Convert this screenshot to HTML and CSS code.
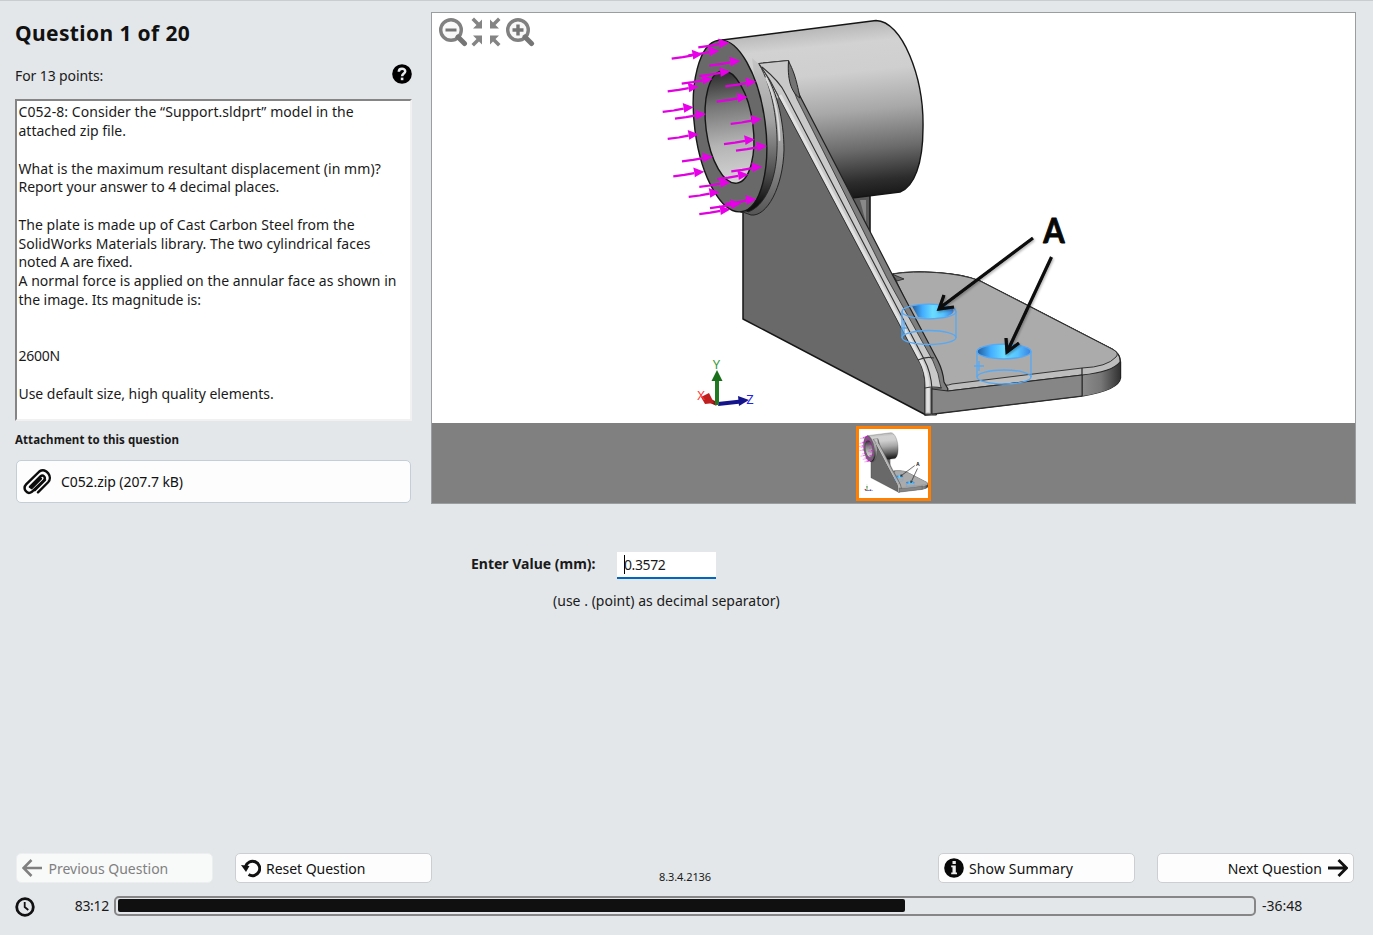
FILE: index.html
```html
<!DOCTYPE html>
<html lang="en">
<head>
<meta charset="utf-8">
<title>Question 1 of 20</title>
<link rel="stylesheet" href="styles.css">
</head>
<body>
<div class="app">
  <main class="main">
    <section class="question">
      <h1 class="title">Question 1 of 20</h1>
      <div class="points-row">
        <span class="points">For 13 points:</span>
        <svg class="help" viewBox="0 0 20 20"><circle cx="10" cy="10" r="9.8"/><path d="M6.8 7.8C6.8 3.6 13.3 3.8 13.2 7.5C13.1 9.6 10.2 9.6 10.1 12.2" fill="none" stroke="#e9ecee" stroke-width="2.5"/><rect x="8.8" y="13.6" width="2.6" height="2.6" fill="#e9ecee"/></svg>
      </div>
      <div class="statement">
        <p class="loose">C052-8: Consider the “Support.sldprt” model in the</p>
        <p>attached zip file.</p>
        <p></p>
        <p class="loose">What is the maximum resultant displacement (in mm)?</p>
        <p class="tight">Report your answer to 4 decimal places.</p>
        <p></p>
        <p class="open">The plate is made up of Cast Carbon Steel from the</p>
        <p class="open">SolidWorks Materials library. The two cylindrical faces</p>
        <p class="tighter">noted A are fixed.</p>
        <p class="open">A normal force is applied on the annular face as shown in</p>
        <p class="tight">the image. Its magnitude is:</p>
        <p></p>
        <p></p>
        <p class="figure">2600N</p>
        <p></p>
        <p class="tight">Use default size, high quality elements.</p>
      </div>
      <h2 class="attach-title">Attachment to this question</h2>
      <button class="attachment">
        <svg viewBox="0 0 30 28"><path d="M15.5 25.2L26 14.8C31.2 9.2 24 -1 17 3.5L3.2 17C-.8 21.5 4.2 28.4 9.2 24.7L21.6 12.8C24.3 9.4 20.6 6.4 18 8.7L7.2 19.6M12.2 23L22.8 12.3M8.8 20.8L18.5 11" fill="none" stroke="#0c0c0c" stroke-width="2.5" stroke-linecap="round"/></svg>
        <span>C052.zip (207.7 kB)</span>
      </button>
    </section>

    <section class="work">
      <div class="viewer">
        <div class="canvas">
          <svg class="model" viewBox="432 13 923 410">
            <defs>
              <linearGradient id="barrel" gradientUnits="userSpaceOnUse" x1="810" y1="26" x2="828" y2="203">
                <stop offset="0" stop-color="#b4b4b4"/><stop offset=".12" stop-color="#d2d2d2"/><stop offset=".28" stop-color="#cfcfcf"/><stop offset=".5" stop-color="#a8a8a8"/><stop offset=".72" stop-color="#6b6b6b"/><stop offset=".9" stop-color="#2c2c2c"/><stop offset="1" stop-color="#161616"/>
              </linearGradient>
              <linearGradient id="bore" x1="0" y1="0" x2="0" y2="1">
                <stop offset="0" stop-color="#2b2b2b"/><stop offset=".3" stop-color="#767676"/><stop offset=".65" stop-color="#b4b4b4"/><stop offset="1" stop-color="#d5d5d5"/>
              </linearGradient>
              <linearGradient id="fillet" x1="0" y1="0" x2="0" y2="1">
                <stop offset="0" stop-color="#c4c4c4"/><stop offset=".45" stop-color="#a8a8a8"/><stop offset=".75" stop-color="#7c7c7c"/><stop offset="1" stop-color="#555"/>
              </linearGradient>
              <linearGradient id="neck" x1="0" y1="0" x2="0" y2="1">
                <stop offset="0" stop-color="#c6c6c6"/><stop offset=".4" stop-color="#a4a4a4"/><stop offset=".72" stop-color="#555"/><stop offset=".95" stop-color="#101010"/>
              </linearGradient>
              <linearGradient id="nose" x1="0" y1="0" x2="1" y2="0">
                <stop offset="0" stop-color="#8c8c8c"/><stop offset=".5" stop-color="#777"/><stop offset="1" stop-color="#333"/>
              </linearGradient>
              <linearGradient id="hole" x1="0" y1="0" x2="1" y2="0">
                <stop offset="0" stop-color="#235a98"/><stop offset=".25" stop-color="#42adff"/><stop offset=".5" stop-color="#6bdcff"/><stop offset=".75" stop-color="#55c4ff"/><stop offset="1" stop-color="#3a80e0"/>
              </linearGradient>
              <filter id="shade" x="-20%" y="-20%" width="150%" height="150%"><feDropShadow dx="1" dy="1.5" stdDeviation="1.2" flood-opacity=".3"/></filter>
              <g id="load"><path d="M-30 4.600L-19 3.200L-16 2.600L-9 1.400" fill="none" stroke="#e000e0" stroke-width="2.200"/><path d="M1 0L-10 -4.300L-9 1L-8.500 5.500Z" fill="#e800e8"/></g>
              <g id="bracket" stroke-linejoin="round">
                <!-- rear post and base plate -->
                <path d="M848 190H870V236L860 222Z" fill="#5b5b5b" stroke="#181818" stroke-width="1.6"/>
                <path d="M860 200H866V223Z" fill="#898989"/>
                <path d="M893 274C916 270 958 272 980 281L1112 349Q1120 354 1120.500 362V378Q1119 390 1082 396L925 415L924 385Z" fill="#858585" stroke="#222" stroke-width="1.400"/>
                <path d="M1082 369Q1114 367 1120 355V379Q1117 391 1082 396Z" fill="url(#nose)"/>
                <path d="M893 274C916 270 958 272 980 281L1112 349Q1121 354 1120 362Q1112 372 1082 375L948 391Q943 391 940 387L936 369Z" fill="#bdbdbd" stroke="#282828" stroke-width="1.2"/>
                <path d="M893 274C916 270 958 272 980 281L1112 349Q1120 353 1116 357Q1107 367 1082 368L952 384Q944 387 941 383L936 365Z" fill="#ababab" stroke="#343434" stroke-width="1"/>
                <path d="M1082 368V396" stroke="#222" fill="none" stroke-width="1.2"/>
                <path d="M892 274L904 279L897 281Z" fill="#666" stroke="#222" stroke-width=".8"/>
                <!-- barrel -->
                <path d="M722 40L876 20.500C902 21 924 77 923 128C923 164 914 187 900 192L741 212Z" fill="url(#barrel)" stroke="#151515" stroke-width="1.4"/>
                <!-- web -->
                <path d="M743 200L765 110L779 97L920 360L925 386V414.500L743 319Z" fill="#696969"/>
                <path d="M743 210V319L925 414.500" fill="none" stroke="#161616" stroke-width="1.5"/>
                <!-- fillet ring and neck behind the annular face -->
                <path d="M759 64C777 86 784 122 784 150C783 187 767 217 751 215L740 211L765 120Z" fill="url(#fillet)" stroke="#242424" stroke-width="1"/>
                <path d="M752 58L759 64C773 88 778 125 777 150C776 181 765 206 748 212L738 209L760 120Z" fill="url(#neck)"/>
                <path d="M759 64C773 88 778 125 777 150C776 181 765 206 748 212" fill="none" stroke="#242424" stroke-width=".9"/>
                <path d="M766 78C775 97 779 120 779.500 140" fill="none" stroke="#dcdcdc" stroke-width="1.800" stroke-linecap="round"/>
                <!-- sloped flange -->
                <path d="M759 63.500L788.500 60.500L792 80L801 98L892 274L938 361Q943 371 944 382L948 389L936 415H925V388Q925 369 918 359L779 97Q771 80 759 63.500Z" fill="#7e7e7e" stroke="#202020" stroke-width="1.200"/>
                <path d="M759 63.500L788.500 60.500L790 81L797 99L887 278L933 361Q939 373 941 388H931V414H925V388Q925 369 918 359L779 97Q771 80 759 63.500Z" fill="#c9c9c9" stroke="#383838" stroke-width=".9"/>
                <path d="M780 95L920 359Q928 374 928 390V412" fill="none" stroke="#e2e2e2" stroke-width="3"/>
                <path d="M762 67Q780 82 785 93L924 359Q931 372 932 389V414" fill="none" stroke="#303030" stroke-width="1.1"/>
                <path d="M788.500 61C787 83 793 94 800 98C796 77 793 70 788.500 61Z" fill="#737373" stroke="#262626" stroke-width="1"/>
                <path d="M918 360Q926 356 934 358M925 388Q933 386 942 388" fill="none" stroke="#383838" stroke-width="1.1"/>
                <path d="M932 389L948 391L1082 375V396L932 414Z" fill="#868686" stroke="#292929" stroke-width="1"/>
                <!-- annular face -->
                <ellipse cx="730" cy="126" rx="35.300" ry="86.500" transform="rotate(-7.500 730 126)" fill="#696969" stroke="#161616" stroke-width="1.4"/>
                <ellipse cx="729.500" cy="127" rx="23.500" ry="56.600" transform="rotate(-7.500 729.500 127)" fill="url(#bore)" stroke="#161616" stroke-width="1.4"/>
                <!-- fixed faces -->
                <path d="M912 306Q929 302 948 306Q959 311 948 316Q934 320 918 317Z" fill="url(#hole)"/>
                <ellipse cx="1004" cy="351.500" rx="27" ry="7.300" fill="url(#hole)"/>
                <g fill="none" stroke="#55a9f5" stroke-width="1.300">
                  <ellipse cx="929" cy="311.500" rx="27" ry="7.300"/><ellipse cx="929" cy="337.500" rx="27" ry="7"/><path d="M902 311V338M956 311V338M904 320V335M902 328H907"/>
                  <ellipse cx="1004" cy="351.500" rx="27" ry="7.300"/><ellipse cx="1004" cy="377" rx="27" ry="7"/><path d="M977 351V377M1031 351V377M979 361V371M974 366H984"/>
                </g>
                <!-- callout -->
                <g filter="url(#shade)">
                  <path d="M1033 238L941 307M944 295L939 309L954 307M1051.500 257L1008 350M1006 338L1007 352L1019 343" fill="none" stroke="#080808" stroke-width="3.200" stroke-linejoin="miter"/>
                </g>
                <text transform="translate(1054 243) scale(.88 1)" class="callout">A</text>
                <!-- force arrows -->
                <use href="#load" x="728.300" y="42.700"/><use href="#load" x="718.300" y="50.700"/><use href="#load" x="701.700" y="54"/><use href="#load" x="739.300" y="61"/><use href="#load" x="729.300" y="71.500"/><use href="#load" x="711.700" y="79"/><use href="#load" x="697.700" y="86.700"/><use href="#load" x="755.300" y="81.700"/><use href="#load" x="746.700" y="97"/><use href="#load" x="692.700" y="107.300"/><use href="#load" x="705" y="114"/><use href="#load" x="760.700" y="119.300"/><use href="#load" x="697.700" y="134.300"/><use href="#load" x="754" y="139.500"/><use href="#load" x="766" y="146"/><use href="#load" x="712" y="156.700"/><use href="#load" x="703.300" y="171.700"/><use href="#load" x="761.300" y="166.700"/><use href="#load" x="747.300" y="174.500"/><use href="#load" x="729.300" y="182.300"/><use href="#load" x="718.700" y="192.300"/><use href="#load" x="755.300" y="199.300"/><use href="#load" x="740" y="203.500"/><use href="#load" x="729.300" y="209.500"/>
                <!-- axis triad -->
                <path d="M717 404L706 399" stroke="#8d1414" stroke-width="4"/><path d="M701 397L709 393L714 403L705 404Z" fill="#c01f1f"/>
                <path d="M718 404L741 401.500" stroke="#14148c" stroke-width="3.800"/><path d="M738 396L749 400L739 406Z" fill="#14148c"/>
                <path d="M717 405V380" stroke="#217a21" stroke-width="4"/><path d="M711.500 381L717 370L722.500 381Z" fill="#1a701a"/>
                <text x="701" y="400" class="axis axis-x">X</text><text x="716.500" y="369" class="axis axis-y">Y</text><text x="750" y="404" class="axis axis-z">Z</text>
              </g>
            </defs>
            <use href="#bracket"/>
          </svg>
          <div class="tools">
            <svg viewBox="0 0 30 30"><circle cx="13" cy="13" r="10.300" fill="#f8f8f8" stroke="#808080" stroke-width="3.400"/><path d="M20 20L26.500 26.500" stroke="#757575" stroke-width="5" stroke-linecap="round"/><path d="M7.500 13H18.500" stroke="#757575" stroke-width="3"/></svg>
            <svg viewBox="0 0 30 30"><g fill="#848484"><path d="M3 .5L8 5.500L11 2.500V11.500H2L5.500 8L.500 3Z"/><path d="M27 .5L22 5.500L19 2.500V11.500H28L24.500 8L29.500 3Z"/><path d="M3 29.500L8 24.500L11 27.500V18.500H2L5.500 22L.500 27Z"/><path d="M27 29.500L22 24.500L19 27.500V18.500H28L24.500 22L29.500 27Z"/></g></svg>
            <svg viewBox="0 0 30 30"><circle cx="13" cy="13" r="10.300" fill="#f8f8f8" stroke="#808080" stroke-width="3.400"/><path d="M20 20L26.500 26.500" stroke="#757575" stroke-width="5" stroke-linecap="round"/><path d="M7.500 13H18.500M13 7.500V18.500" stroke="#757575" stroke-width="3.400"/></svg>
          </div>
        </div>
        <div class="strip"><div class="thumb"><svg viewBox="664 -4 457 457"><use href="#bracket"/></svg></div></div>
      </div>
      <div class="answer">
        <label class="answer-label">Enter Value (mm):</label>
        <div class="answer-field"><i class="caret"></i><span>0.3572</span></div>
      </div>
      <div class="hint">(use . (point) as decimal separator)</div>
    </section>
  </main>

  <footer class="footer">
    <div class="nav">
      <button class="btn prev"><svg viewBox="0 0 20 20"><path d="M20 10H2M9.500 2L1.500 10L9.500 18" fill="none" stroke="#808080" stroke-width="2.600"/></svg><span>Previous Question</span></button>
      <button class="btn reset"><svg viewBox="0 0 20 20"><path d="M4.600 8.500A7.200 7.200 0 1 1 7.600 16.500" fill="none" stroke="#111" stroke-width="3"/><path d="M0 7L8.500 8L5 14Z" fill="#111"/></svg><span>Reset Question</span></button>
      <div class="version">8.3.4.2136</div>
      <button class="btn summary"><svg viewBox="0 0 20 20"><circle cx="10" cy="10" r="9.800" fill="#080808"/><path d="M8.500 3H11.800V6H8.500ZM7.200 7.500H11.800V14.500H13V16.300H7.200V14.500H8.500V9.300H7.200Z" fill="#eee"/></svg><span>Show Summary</span></button>
      <button class="btn next"><span>Next Question</span><svg viewBox="0 0 20 20"><path d="M0 10H18.500M10.500 2L18.500 10L10.500 18" fill="none" stroke="#111" stroke-width="2.900"/></svg></button>
    </div>
    <div class="timer">
      <svg class="clock" viewBox="0 0 20 20"><circle cx="10" cy="10" r="8.300" fill="none" stroke="#111" stroke-width="2.800"/><path d="M9.700 5V10L13.300 13" fill="none" stroke="#111" stroke-width="1.800"/></svg>
      <span class="elapsed">83:12</span>
      <div class="progress"><div class="bar"></div></div>
      <span class="remaining">-36:48</span>
    </div>
  </footer>
</div>
</body>
</html>
```
FILE: styles.css
```css
* { box-sizing: border-box; }
body { margin: 0; background: #e3e7ea; color: #1a1a1a; font: 14px/18.75px "Noto Sans", "Open Sans", sans-serif; }
.app { height: 935px; display: flex; flex-direction: column; justify-content: space-between; border-top: 1px solid #c9cdd0; overflow: hidden; }
h1, h2, p { margin: 0; white-space: nowrap; }
button { font: inherit; color: #111; text-align: left; }
span, .hint { white-space: nowrap; }
.main { display: flex; gap: 19px; padding: 11px 17px 0 15px; }
.question { width: 397px; display: flex; flex-direction: column; }
.title { font-size: 21px; line-height: 30px; padding-top: 6px; letter-spacing: .38px; color: #111; }
.points-row { display: flex; justify-content: space-between; align-items: center; height: 22px; margin-top: 17px; }
.points { letter-spacing: -.1px; }
.help { width: 20px; height: 20px; margin-top: -4px; }
.statement { height: 322px; margin-top: 12px; padding: 2.3px 0 0 1.5px; background: #fff; border: 2px solid; border-color: #858585 #f1f1f1 #f1f1f1 #858585; }
.statement p { height: 18.75px; }
.loose { letter-spacing: .065px; }
.open { letter-spacing: .035px; }
.tight { letter-spacing: -.04px; }
.tighter { letter-spacing: -.09px; }
.figure { letter-spacing: -.25px; }
.attach-title { font-size: 11.5px; line-height: 18px; margin-top: 10px; letter-spacing: .07px; }
.attachment { display: flex; align-items: center; gap: 9px; width: 395px; height: 43px; margin: 11px 0 0 1px; padding: 0 6px; background: #fdfdfd; border: 1px solid #c3ced8; border-radius: 5px; }
.attachment svg { width: 29px; height: 27px; }
.attachment span { letter-spacing: -.08px; padding-top: 2px; }
.work { width: 925px; }
.viewer { height: 492px; border: 1px solid #999ea1; display: flex; flex-direction: column; }
.canvas { position: relative; height: 410px; background: #fff; }
.model { display: block; width: 923px; height: 410px; }
.tools { position: absolute; left: 5.5px; top: 4px; display: flex; gap: 3.5px; }
.tools svg { width: 30px; height: 30px; }
.strip { flex: 1; background: #808080; display: flex; justify-content: center; align-items: center; }
.thumb { width: 75px; height: 75px; margin: 1px 1px 0 0; border: 3px solid #ff7f00; background: #fff; }
.thumb svg { display: block; width: 69px; height: 69px; }
.callout { font: bold 35px Lato, sans-serif; text-anchor: middle; fill: #080808; stroke: #080808; stroke-width: .9px; }
.axis { font: 13px "Noto Sans", sans-serif; text-anchor: middle; }
.axis-x { fill: #f33; }
.axis-y { fill: #3b9a3b; }
.axis-z { fill: #2222ee; }
.answer { display: flex; align-items: center; gap: 21px; margin-top: 48px; padding-left: 40px; height: 27px; }
.answer-label { font-weight: bold; width: 125px; padding-bottom: 2px; white-space: nowrap; }
.answer-field { display: flex; align-items: center; width: 99px; height: 27px; background: #fff; border-bottom: 2px solid #0067c0; padding-left: 7px; letter-spacing: -.4px; }
.answer-field span { padding-top: 1px; }
.caret { width: 1px; height: 19px; background: #000; margin-right: -1px; }
.hint { margin: 13px 0 0 122px; letter-spacing: .02px; }
.footer { height: 82px; }
.nav { display: flex; height: 30px; padding-left: 16px; }
.btn { display: flex; align-items: center; width: 197px; height: 30px; padding: 0 5px; gap: 5px; background: #fdfdfd; border: 1px solid #cbcfd2; border-radius: 5px; }
.btn svg { width: 20px; height: 20px; flex: none; }
.btn span { padding-top: 2px; }
.prev { color: #808080; background: #f8f9f9; border-color: #eceeef; gap: 6.5px; }
.reset { margin-left: 22px; }
.reset span { letter-spacing: -.04px; }
.version { width: 506px; padding-top: 15px; text-align: center; font-size: 11px; letter-spacing: -.08px; }
.summary span { letter-spacing: .14px; }
.next { margin-left: 22px; gap: 6px; justify-content: flex-end; }
.timer { display: flex; align-items: center; margin-top: 12px; height: 21px; padding-left: 15px; }
.clock { width: 20px; height: 20px; margin-top: 2px; }
.elapsed { width: 74px; text-align: right; margin-right: 5px; padding-top: 2px; letter-spacing: -.3px; }
.progress { width: 1142px; height: 20px; border: 2px solid #868686; border-radius: 5px; padding: 1.5px; }
.bar { width: 787px; height: 13px; background: #101010; border-radius: 2px; }
.remaining { margin-left: 6px; padding-top: 2px; }
```
